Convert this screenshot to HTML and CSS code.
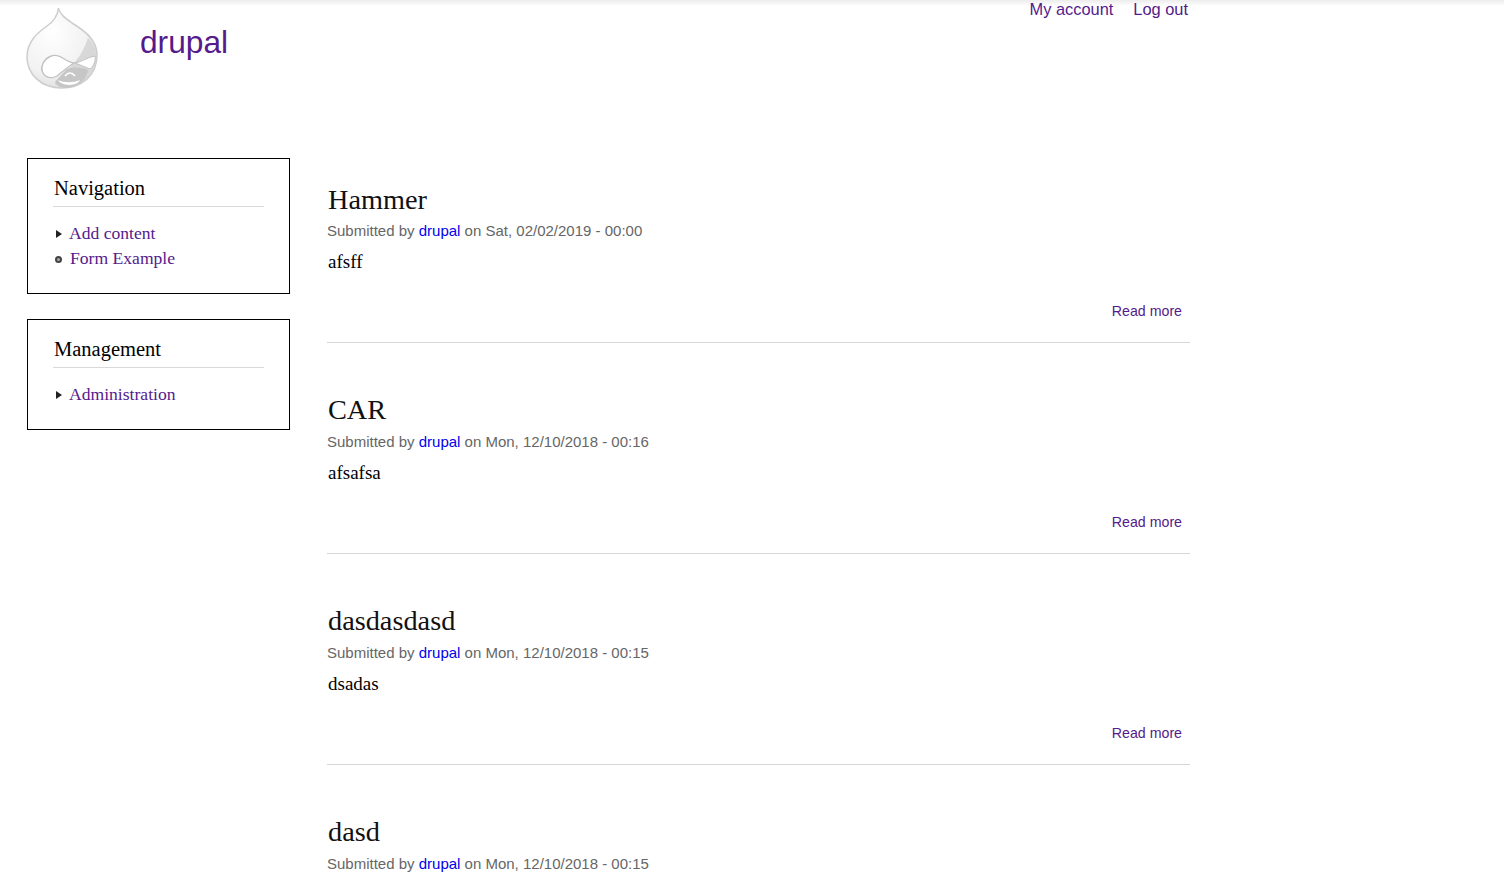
FILE: index.html
```html
<!DOCTYPE html>
<html lang="en">
<head>
  <meta charset="UTF-8" />
  <title>drupal</title>
  <link rel="stylesheet" href="styles.css">
</head>
<body>
  <div class="page">
    <header class="site-header">
      <a class="logo" href="#">
        <svg width="74" height="84" viewBox="0 0 74 84">
          <defs>
            <radialGradient id="dropFill" cx="0.35" cy="0.3" r="0.85">
              <stop offset="0" stop-color="#ffffff"/>
              <stop offset="0.6" stop-color="#f2f2f2"/>
              <stop offset="1" stop-color="#d6d6d6"/>
            </radialGradient>
            <filter id="soft"><feGaussianBlur stdDeviation="0.4"/></filter>
          </defs>
          <g filter="url(#soft)">
            <path d="M33.5 1 C34.5 7 40 11 47 16 C60 24 72 33 72 48 C72 69 56 81 36.5 81 C16 81 2 67 2 50 C2 35 12 26 22 19 C28 15 32.5 9 33.5 1 Z" fill="url(#dropFill)" stroke="#cdcdcd" stroke-width="1.5"/>
            <path d="M63 31 C67 35 71 41 71 47 C71 62 62 74 50 79 C44 81 36 80 30 76 C36 70 44 62 50 55 C56 48 60 40 63 31 Z" fill="#d8d8d8"/>
            <path d="M42 62 C48 60 56 60 63 63 C62 72 54 80 42 81 C36 81 30 78 30 75 C34 70 38 66 42 62 Z" fill="#c6c6c6"/>
            <path d="M17.5 58 C20 50 29 46 36 50 C41 53 45 56 49 56 C43 60 38 64 32 69 C27 72 20 71 17.5 65 C16.5 63 16.5 60 17.5 58 Z" fill="#ffffff" stroke="#c2c2c2" stroke-width="1.4"/>
            <path d="M50 56 C56 55 63 50 70 49 C71 53 69 59 65 62 C60 60 55 58 50 56 Z" fill="#ffffff" stroke="#c2c2c2" stroke-width="1"/>
            <path d="M40 69 C43 65 47 65 50 69" fill="none" stroke="#ffffff" stroke-width="1.6"/>
            <path d="M33 73 C39 76 48 76 55 73 C53 79 37 80 33 73 Z" fill="#ffffff"/>
          </g>
        </svg>
      </a>
      <a class="site-name" href="#">drupal</a>
      <nav class="secondary-menu">
        <a href="#">My account</a>
        <a href="#">Log out</a>
      </nav>
    </header>

    <div class="columns">
      <aside class="sidebar">
        <section class="block">
          <h2>Navigation</h2>
          <ul>
            <li class="collapsed"><a href="#">Add content</a></li>
            <li class="leaf"><a href="#">Form Example</a></li>
          </ul>
        </section>
        <section class="block">
          <h2>Management</h2>
          <ul>
            <li class="collapsed"><a href="#">Administration</a></li>
          </ul>
        </section>
      </aside>

      <main class="content">
        <article class="node">
          <h2><a href="#">Hammer</a></h2>
          <div class="submitted">Submitted by <a href="#">drupal</a> on Sat, 02/02/2019 - 00:00</div>
          <p>afsff</p>
          <div class="links"><a href="#">Read more</a></div>
        </article>
        <article class="node">
          <h2><a href="#">CAR</a></h2>
          <div class="submitted">Submitted by <a href="#">drupal</a> on Mon, 12/10/2018 - 00:16</div>
          <p>afsafsa</p>
          <div class="links"><a href="#">Read more</a></div>
        </article>
        <article class="node">
          <h2><a href="#">dasdasdasd</a></h2>
          <div class="submitted">Submitted by <a href="#">drupal</a> on Mon, 12/10/2018 - 00:15</div>
          <p>dsadas</p>
          <div class="links"><a href="#">Read more</a></div>
        </article>
        <article class="node node-last">
          <h2><a href="#">dasd</a></h2>
          <div class="submitted">Submitted by <a href="#">drupal</a> on Mon, 12/10/2018 - 00:15</div>
        </article>
      </main>
    </div>
  </div>
</body>
</html>
```

FILE: styles.css
```css
* {
  box-sizing: border-box;
  margin: 0;
  padding: 0;
}

body {
  font-family: "Liberation Serif", serif;
  background: #fff linear-gradient(to bottom, #ececec, #fff) no-repeat top / 100% 6px;
  color: #000;
}

a {
  color: #551a8b;
  text-decoration: none;
}

.page {
  width: 1190px;
}

.site-header {
  display: flex;
  height: 158px;
  padding-left: 25px;
  font-family: "Liberation Sans", sans-serif;
}

.logo {
  display: block;
  height: 84px;
  margin-top: 7px;
}

.site-name {
  margin: 22px 0 0 41px;
  font-size: 31.7px;
  line-height: 40px;
  height: 40px;
}

.secondary-menu {
  display: flex;
  align-self: flex-start;
  gap: 20px;
  margin-left: auto;
  margin-top: -1px;
  padding-right: 2px;
  font-size: 16.4px;
  line-height: 20px;
}

.columns {
  display: flex;
}

.sidebar {
  width: 263px;
  margin-left: 27px;
  flex-shrink: 0;
}

.block {
  border: 1px solid #000;
  padding: 17px 25px 22px 25px;
  margin-bottom: 25px;
}

.block h2 {
  font-size: 20.5px;
  font-weight: normal;
  line-height: 24px;
  padding-bottom: 6px;
  padding-left: 1px;
  border-bottom: 1px solid #d9d9d9;
  margin-bottom: 14px;
}

.block ul {
  list-style: none;
}

.block li {
  position: relative;
  font-size: 17.6px;
  line-height: 25px;
  padding-left: 16px;
}

.block li.collapsed::before {
  content: "";
  position: absolute;
  left: 3px;
  top: 9px;
  border-left: 6px solid #222;
  border-top: 4.5px solid transparent;
  border-bottom: 4.5px solid transparent;
}

.block li.leaf {
  padding-left: 17px;
}

.block li.leaf::before {
  content: "";
  position: absolute;
  left: 2px;
  top: 10px;
  width: 3px;
  height: 3px;
  border: 2px solid #444;
  border-radius: 50%;
  background: #aaa;
}

.content {
  flex: 1;
  margin-left: 37px;
}

.node {
  height: 211px;
  padding-top: 50px;
  border-bottom: 1px solid #d6d6d6;
}

.node:first-child {
  height: 185px;
  padding-top: 25px;
}

.node-last {
  height: auto;
  border-bottom: 0;
}

.node h2 {
  font-size: 28.3px;
  font-weight: normal;
  line-height: 34px;
  padding-left: 1px;
}

.node h2 a {
  color: #111;
}

.submitted {
  font-family: "Liberation Sans", sans-serif;
  font-size: 15px;
  line-height: 20px;
  margin-top: 5px;
  color: #666;
}

.node:first-child .submitted {
  margin-top: 4px;
}

.submitted a {
  color: #0000ee;
}

.node p {
  font-size: 19px;
  line-height: 22px;
  margin-top: 10px;
  padding-left: 1px;
}

.links {
  font-family: "Liberation Sans", sans-serif;
  font-size: 14.2px;
  line-height: 20px;
  text-align: right;
  padding-right: 8px;
  margin-top: 28px;
}
```
